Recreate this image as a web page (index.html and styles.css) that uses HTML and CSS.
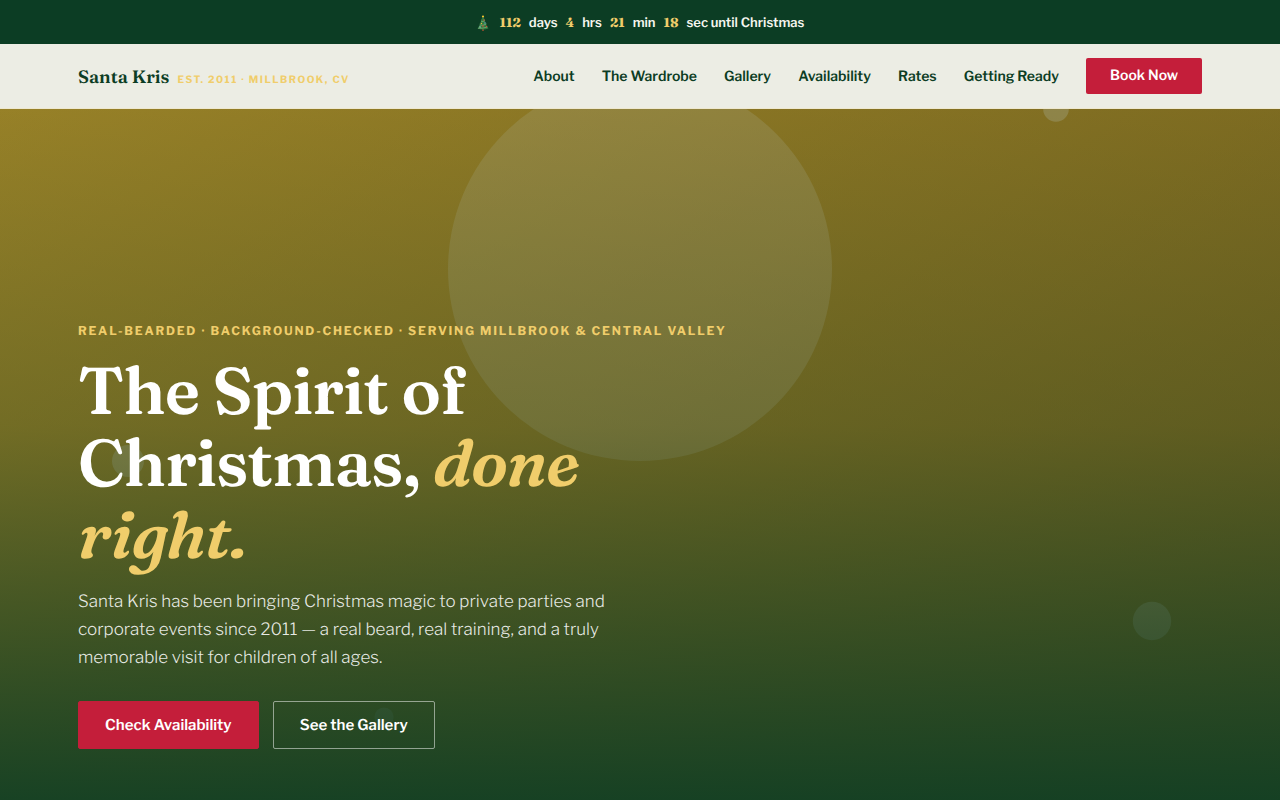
FILE: index.html
```html
<!DOCTYPE html>
<html lang="en">
<head>
<meta charset="utf-8">
<meta name="viewport" content="width=device-width, initial-scale=1">
<title>Santa Kris</title>
<link rel="stylesheet" href="styles.css">
</head>
<body>
<div class="countdown">
  <svg class="tree" viewBox="0 0 14 16" aria-hidden="true">
    <path fill="#7a4a2a" d="M6 13h2v3H6z"/>
    <path fill="#2f7a3f" d="M7 1.500 9.300 5.500 8.600 5.700 10.500 9 9.800 9.300 12.500 13.500Q7 15.500 1.500 13.500L4.200 9.300 3.500 9 5.400 5.700 4.700 5.500z"/>
    <path fill="none" stroke="#8fc08a" stroke-width=".6" d="M5 6.200Q7 7 9 5.700M3.500 10Q7 11 10.500 9M2 13.300Q7 13.500 11.500 12"/>
    <circle cx="7" cy="1.500" r="1.100" fill="#f4c430"/>
    <circle cx="8" cy="5" r=".7" fill="#d8433c"/>
    <circle cx="5.500" cy="8.500" r=".7" fill="#e8b33c"/>
    <circle cx="9" cy="8" r=".7" fill="#6f9ed8"/>
    <circle cx="7" cy="11" r=".8" fill="#d8433c"/>
    <circle cx="4" cy="12" r=".7" fill="#b9d5e8"/>
    <circle cx="10.500" cy="11.500" r=".7" fill="#d8433c"/>
  </svg>
  <b class="num">112</b><span>days</span>
  <b class="num">4</b><span>hrs</span>
  <b class="num">21</b><span>min</span>
  <b class="num">18</b><span>sec until Christmas</span>
</div>
<header class="header">
  <div class="wrap bar">
    <a class="brand" href="#top"><span class="name">Santa Kris</span><span class="est">Est. 2011 · Millbrook, CV</span></a>
    <nav class="nav">
      <a href="#about">About</a>
      <a href="#wardrobe">The Wardrobe</a>
      <a href="#gallery">Gallery</a>
      <a href="#availability">Availability</a>
      <a href="#rates">Rates</a>
      <a href="#ready">Getting Ready</a>
      <a class="book" href="#book">Book Now</a>
    </nav>
  </div>
</header>
<main class="hero" id="top">
  <svg class="scene" viewBox="0 0 400 300" preserveAspectRatio="xMidYMid slice" aria-hidden="true">
    <defs>
      <linearGradient id="gold" x1="0" y1="0" x2="1" y2="1">
        <stop offset="0" stop-color="#d8a22a"/>
        <stop offset="1" stop-color="#8f6518"/>
      </linearGradient>
    </defs>
    <rect width="400" height="300" fill="url(#gold)"/>
    <g fill="#fff">
      <circle cx="200" cy="90" r="60" opacity=".17"/>
      <circle cx="330" cy="40" r="4" opacity=".25"/>
      <circle cx="40" cy="150" r="5" opacity=".25"/>
      <circle cx="360" cy="200" r="6" opacity=".25"/>
      <circle cx="120" cy="230" r="3" opacity=".25"/>
    </g>
  </svg>
  <div class="shade"></div>
  <div class="wrap content">
    <p class="eyebrow">Real-Bearded · Background-Checked · Serving Millbrook &amp; Central Valley</p>
    <h1 class="title">The Spirit of Christmas, <em>done right.</em></h1>
    <p class="lead">Santa Kris has been bringing Christmas magic to private parties and corporate events since 2011 — a real beard, real training, and a truly memorable visit for children of all ages.</p>
    <div class="actions">
      <a class="btn primary" href="#availability">Check Availability</a>
      <a class="btn outline" href="#gallery">See the Gallery</a>
    </div>
  </div>
</main>
</body>
</html>
```
FILE: styles.css
```css
:root {
  --green: #0c3d24;
  --gold: #f0cd6b;
  --red: #c41e3a;
  --cream: #ecede4;
  --serif: Fraunces, "Liberation Serif", "Times New Roman", serif;
  --sans: "Libre Franklin", Inter, "Liberation Sans", sans-serif;
}
* { box-sizing: border-box; }
html { scrollbar-width: none; }
body {
  margin: 0;
  font-family: var(--sans);
  font-size: 14px;
  color: var(--green);
  background: var(--cream);
  -webkit-font-smoothing: antialiased;
  text-rendering: geometricPrecision;
}
a { color: inherit; text-decoration: none; }
.wrap {
  width: 100%;
  max-width: 1180px;
  margin: 0 auto;
  padding: 0 28px;
}
.countdown {
  display: flex;
  align-items: center;
  justify-content: center;
  flex-wrap: wrap;
  gap: 8px;
  min-height: 44px;
  padding-top: 1px;
  background: var(--green);
  color: #f5f5ee;
  font-size: 13px;
  line-height: 18px;
  font-weight: 600;
}
.tree { width: 14px; height: 16px; margin-right: 2px; }
.num { font: 700 13px/18px var(--serif); color: var(--gold); }
.header { border-bottom: 1px solid #eee8cf; background: var(--cream); }
.bar {
  display: flex;
  align-items: center;
  justify-content: space-between;
  padding-top: 14px;
  padding-bottom: 14px;
}
.brand { display: flex; align-items: baseline; gap: 8px; }
.name { font: 600 18px var(--serif); }
.est {
  font-size: 10px;
  font-weight: 700;
  letter-spacing: 1.5px;
  text-transform: uppercase;
  color: var(--gold);
}
.nav { display: flex; align-items: center; gap: 27px; font-weight: 600; }
.book {
  padding: 0 24px;
  line-height: 36px;
  border-radius: 2px;
  background: var(--red);
  color: #fff;
}
.hero {
  position: relative;
  display: flex;
  align-items: flex-end;
  min-height: 88vh;
  padding: 64px 0;
  overflow: hidden;
}
.scene, .shade { position: absolute; inset: 0; width: 100%; height: 100%; }
.shade {
  background: linear-gradient(180deg, rgba(12, 61, 36, .3) 0%, rgba(12, 61, 36, .45) 45%, rgba(12, 61, 36, .95) 100%);
}
.content { position: relative; }
.eyebrow {
  margin: 0 0 15px;
  font-size: 12px;
  line-height: 16px;
  font-weight: 700;
  letter-spacing: 1.8px;
  text-transform: uppercase;
  color: var(--gold);
}
.title {
  max-width: 600px;
  margin: 0 0 18px;
  font: 600 66px/72px var(--serif);
  letter-spacing: -1px;
  color: #fff;
}
.title em { color: var(--gold); }
.lead {
  max-width: 560px;
  margin: 0 0 29px;
  font-size: 17px;
  line-height: 28px;
  font-weight: 300;
  color: rgba(255, 255, 255, .88);
}
.actions { display: flex; flex-wrap: wrap; gap: 14px; }
.btn {
  padding: 0 26px;
  border: 1px solid var(--red);
  border-radius: 2px;
  font-size: 15px;
  line-height: 46px;
  font-weight: 600;
  color: #fff;
}
.primary { background: var(--red); }
.outline { border-color: rgba(255, 255, 255, .5); }
```
